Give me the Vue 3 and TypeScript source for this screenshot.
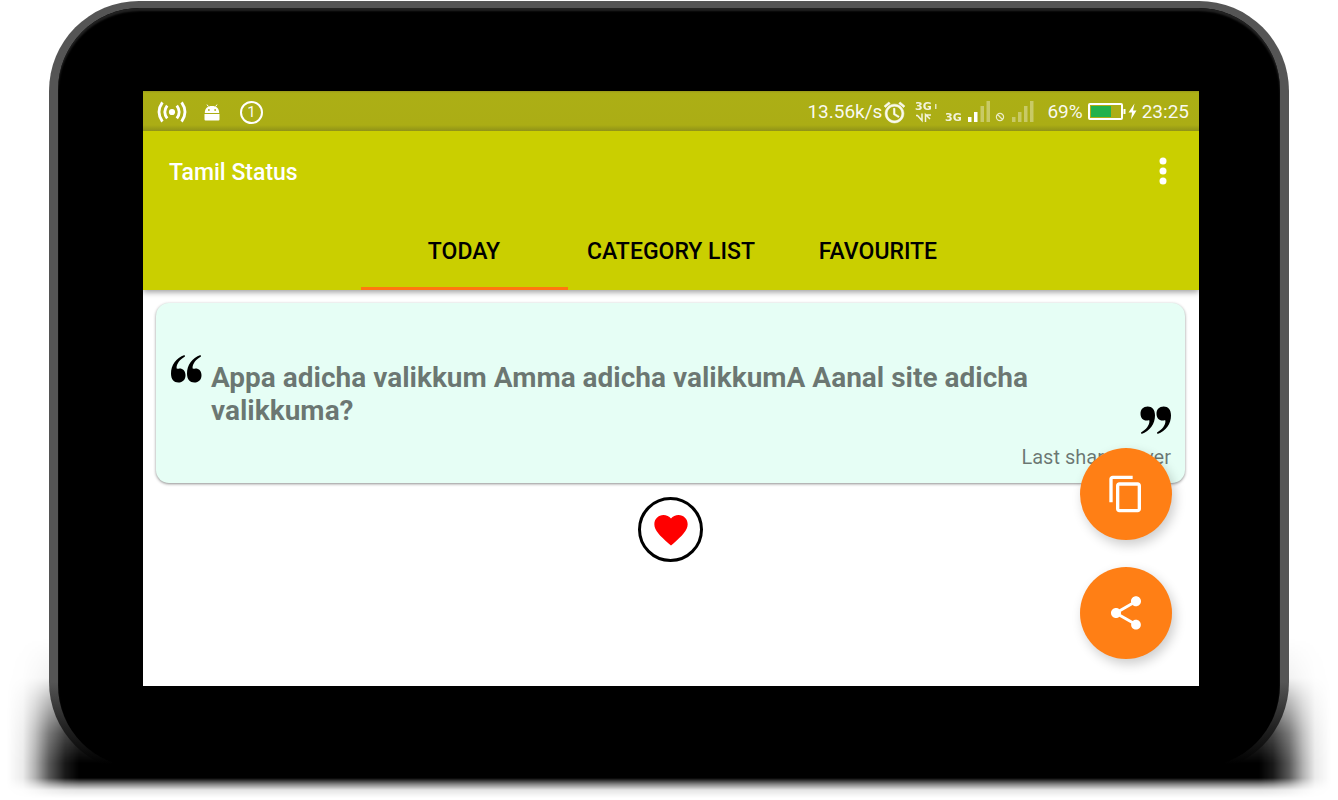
<script setup lang="ts">
import { ref } from 'vue'

const tabs: string[] = ['TODAY', 'CATEGORY LIST', 'FAVOURITE']
const activeTab = ref<string>('TODAY')
const liked = ref<boolean>(true)
</script>

<template>
  <div class="stage">
    <div class="device">
      <div class="face">
        <main class="screen">
          <header class="status">
            <div class="status-left">
              <svg width="30" height="22" viewBox="0 0 30 22" fill="none" stroke="#fff" stroke-width="2.8" aria-hidden="true">
                <circle cx="15" cy="11" r="3.1" fill="#fff" stroke="none" />
                <path d="M10.2 4.6Q5.4 11 10.2 17.4M5.4 1.4Q-1.4 11 5.4 20.6M19.8 4.6Q24.6 11 19.8 17.4M24.6 1.4Q31.400 11 24.6 20.6" />
              </svg>
              <svg class="robot" width="16" height="17" viewBox="0 0 16 17" fill="#fff" aria-hidden="true">
                <path d="M3 .6l1.400 2M13 .6l-1.400 2" stroke="#fff" stroke-width="1" />
                <path fill-rule="evenodd" d="M.8 9C.8 4.500 3.500 2 8 2s7.200 2.500 7.200 7zM4 5.200h1.700v1.600H4zM10.300 5.200H12v1.600h-1.700z" />
                <path d="M.5 10h15v5.500q0 1-1 1h-13q-1 0-1-1z" />
              </svg>
              <span class="count">1</span>
            </div>
            <div class="status-right">
              <span>13.56k/s</span>
              <svg class="alarm" width="25" height="25" viewBox="0 0 24 24" fill="#fff" fill-opacity=".92" stroke="#fff" stroke-width=".5" aria-hidden="true">
                <path d="M22 5.720l-4.600-3.860-1.290 1.530 4.600 3.860L22 5.720zM7.880 3.390L6.600 1.860 2 5.710l1.290 1.530 4.590-3.850zM12.500 8H11v6l4.750 2.850.75-1.230-4-2.370V8zM12 4c-4.970 0-9 4.030-9 9s4.020 9 9 9c4.970 0 9-4.030 9-9s-4.030-9-9-9zm0 16c-3.870 0-7-3.130-7-7s3.130-7 7-7 7 3.130 7 7-3.130 7-7 7z" />
              </svg>
              <svg class="network" width="120" height="24" viewBox="0 0 120 24" fill="#fff" aria-hidden="true">
                <text x="0" y="10" class="net">3G</text>
                <path d="M20 4h1.500v5H20z" opacity=".7" />
                <path d="M1 15.500h1.500L7 20.500V13.500M10.500 22V14.500L15 19M10.500 15h5.500" fill="none" stroke="#fff" stroke-width="1.500" opacity=".85" />
                <text x="30" y="21" class="net">3G</text>
                <path d="M53 17h3.500v5H53zM59 12h3.500v10H59z" />
                <path d="M65.500 6H69v16h-3.500zM71.500 1H75v21h-3.500zM97 17h3.500v5H97zM103 12h3.500v10H103zM109 6h3.500v16H109zM115 1h3.500v21H115z" opacity=".35" />
                <path d="M88.600 17a3.600 3.600 0 1 1-7.200 0a3.600 3.600 0 1 1 7.200 0M82.500 14.500l5 5" fill="none" stroke="#fff" stroke-width="1.200" opacity=".75" />
              </svg>
              <span>69%</span>
              <svg class="battery" width="50" height="18" viewBox="0 0 50 18" aria-hidden="true">
                <rect x="1" y="1" width="33" height="15" rx="1" fill="none" stroke="#fff" stroke-width="2" />
                <path d="M3 3h20v11H3z" fill="#22b14c" />
                <path d="M35.500 6h2v5h-2z" fill="#fff" />
                <path d="M46.500 .5L40.500 9.500h3.500L43 16.500 48.500 7.500H45z" fill="#fff" />
              </svg>
              <time>23:25</time>
            </div>
          </header>

          <div class="appbar">
            <div class="toolbar">
              <h1>Tamil Status</h1>
              <button class="more" type="button" aria-label="More options">
                <svg width="40" height="40" viewBox="0 0 24 24" fill="#fff" aria-hidden="true">
                  <circle cx="12" cy="6" r="2.100" /><circle cx="12" cy="12" r="2.100" /><circle cx="12" cy="18" r="2.100" />
                </svg>
              </button>
            </div>
            <nav class="tabs">
              <button
                v-for="tab in tabs"
                :key="tab"
                type="button"
                class="tab"
                :class="{ active: tab === activeTab }"
                @click="activeTab = tab"
              >{{ tab }}</button>
            </nav>
          </div>

          <section class="content">
            <article class="card">
              <div class="quote">
                <svg class="mark" width="31" height="28" viewBox="0 0 31 28" aria-hidden="true">
                  <path d="M13.500 0C5 3 0 10 0 18.500C0 24.500 3 27.500 7.300 27.500C11.800 27.500 14.500 24.500 14.500 20.200C14.500 16 12 13.400 8.500 13.400C7.500 13.400 6.800 14 5.600 13.600C5.200 9 9 4.500 14 1.600z" />
                  <path d="M29.500 0C21 3 16 10 16 18.500C16 24.500 19 27.500 23.300 27.500C27.800 27.500 30.500 24.500 30.500 20.200C30.500 16 28 13.400 24.500 13.400C23.500 13.400 22.800 14 21.600 13.600C21.200 9 25 4.500 30 1.600z" />
                </svg>
                <p>Appa adicha valikkum Amma adicha valikkumA Aanal site adicha valikkuma?</p>
                <svg class="mark close" width="31" height="28" viewBox="0 0 31 28" aria-hidden="true">
                  <g transform="rotate(180 15.500 14)">
                    <path d="M13.500 0C5 3 0 10 0 18.500C0 24.500 3 27.500 7.300 27.500C11.800 27.500 14.500 24.500 14.500 20.200C14.500 16 12 13.400 8.500 13.400C7.500 13.400 6.800 14 5.600 13.600C5.200 9 9 4.500 14 1.600z" />
                    <path d="M29.500 0C21 3 16 10 16 18.500C16 24.500 19 27.500 23.300 27.500C27.800 27.500 30.500 24.500 30.500 20.200C30.500 16 28 13.400 24.500 13.400C23.500 13.400 22.800 14 21.600 13.600C21.200 9 25 4.500 30 1.600z" />
                  </g>
                </svg>
              </div>
              <p class="shared">Last share Never</p>
            </article>
            <button class="like" type="button" aria-label="Favourite" :aria-pressed="liked" @click="liked = !liked">
              <svg width="40" height="40" viewBox="0 0 24 24" :fill="liked ? '#f00' : '#999'" aria-hidden="true">
                <path d="M12 21.350l-1.450-1.320C5.400 15.360 2 12.280 2 8.500 2 5.420 4.420 3 7.500 3c1.740 0 3.410.81 4.500 2.090C13.090 3.810 14.760 3 16.500 3 19.580 3 22 5.420 22 8.500c0 3.780-3.400 6.860-8.550 11.540L12 21.350z" />
              </svg>
            </button>
          </section>

          <div class="fabs">
            <button class="fab" type="button" aria-label="Copy">
              <svg width="40" height="40" viewBox="0 0 24 24" fill="#fff" aria-hidden="true">
                <path d="M16 1H4c-1.100 0-2 .9-2 2v14h2V3h12V1zm3 4H8c-1.100 0-2 .9-2 2v14c0 1.100.9 2 2 2h11c1.100 0 2-.9 2-2V7c0-1.100-.9-2-2-2zm0 16H8V7h11v14z" />
              </svg>
            </button>
            <button class="fab" type="button" aria-label="Share">
              <svg width="40" height="40" viewBox="0 0 24 24" fill="#fff" aria-hidden="true">
                <path d="M18 16.080c-.76 0-1.440.3-1.960.77L8.910 12.700c.05-.23.09-.46.09-.7s-.04-.47-.09-.7l7.050-4.110c.54.5 1.250.81 2.040.81 1.660 0 3-1.340 3-3s-1.340-3-3-3-3 1.340-3 3c0 .24.04.47.09.7L8.040 9.810C7.500 9.310 6.790 9 6 9c-1.660 0-3 1.340-3 3s1.340 3 3 3c.79 0 1.500-.31 2.040-.81l7.120 4.160c-.05.21-.08.43-.08.65 0 1.610 1.310 2.920 2.920 2.920 1.610 0 2.920-1.310 2.920-2.920s-1.310-2.920-2.920-2.920z" />
              </svg>
            </button>
          </div>
        </main>
      </div>
    </div>
  </div>
</template>

<style>
body {
  background: #fff;
}
</style>

<style scoped>
* {
  box-sizing: border-box;
}

button {
  border: 0;
  margin: 0;
  padding: 0;
  background: none;
  font: inherit;
  color: inherit;
  cursor: pointer;
}

svg {
  display: block;
  flex: none;
}

.stage {
  display: flex;
  min-height: 100vh;
  padding: 1px 49px 28px;
  overflow: hidden;
  font-family: Roboto, "Noto Sans", sans-serif;
}

.device {
  position: relative;
  display: flex;
  flex: 1;
  min-width: 0;
  padding: 7px 9px 5px;
  border-radius: 90px;
  background: linear-gradient(#555, #555 calc(100% - 90px), #222 calc(100% - 45px), #000 calc(100% - 8px));
}

.device::before {
  content: "";
  position: absolute;
  z-index: -1;
  left: -42px;
  right: -42px;
  bottom: -26px;
  height: 160px;
  background: linear-gradient(90deg, transparent, rgba(0, 0, 0, .08) 16px, rgba(0, 0, 0, .3) 28px, rgba(0, 0, 0, .65) 42px, rgba(0, 0, 0, .9) 58px, #000 72px, #000 calc(100% - 72px), rgba(0, 0, 0, .9) calc(100% - 58px), rgba(0, 0, 0, .65) calc(100% - 42px), rgba(0, 0, 0, .3) calc(100% - 28px), rgba(0, 0, 0, .08) calc(100% - 16px), transparent);
  mask-image: linear-gradient(transparent, rgba(0, 0, 0, .08) 40px, rgba(0, 0, 0, .4) 62px, rgba(0, 0, 0, .8) 95px, #000 125px, #000 140px, rgba(0, 0, 0, .5) 146px, rgba(0, 0, 0, .1) 152px, transparent);
}

.face {
  display: flex;
  flex: 1;
  min-width: 0;
  padding: 83px 81px 81px 85px;
  border-radius: 82px;
  background: #000;
  box-shadow: inset 0 3px 2px #222;
}

.screen {
  position: relative;
  display: flex;
  flex: 1;
  flex-direction: column;
  min-width: 0;
  background: #fff;
}

.status {
  display: flex;
  align-items: center;
  justify-content: space-between;
  height: 40px;
  padding: 2px 10px 0 14px;
  background: linear-gradient(#99991a, #acaf15 2px, #abad15 34px, #8f9218);
  color: rgba(255, 255, 255, .95);
  font-size: 19px;
  line-height: 24px;
}

.status-left,
.status-right {
  display: flex;
  align-items: center;
}

.status-left {
  gap: 17px;
}

.count {
  width: 23px;
  height: 23px;
  margin-left: 3px;
  border: 2px solid #fff;
  border-radius: 50%;
  font-size: 15px;
  line-height: 19px;
  text-align: center;
}

.network {
  margin: 0 12px 0 8px;
}

.net {
  font-family: "DejaVu Sans", sans-serif;
  font-size: 11px;
  font-weight: 700;
  opacity: .85;
}

.battery {
  margin: 0 4px 0 5px;
}

.appbar {
  z-index: 1;
  background: #cacf00;
  box-shadow: 0 2px 6px rgba(0, 0, 0, .4);
  clip-path: inset(0 0 -14px);
}

.toolbar {
  display: flex;
  align-items: center;
  justify-content: space-between;
  height: 80px;
  padding: 0 16px 0 26px;
}

h1 {
  margin: 0;
  padding-top: 3px;
  color: #fff;
  font-size: 23px;
  font-weight: 500;
  line-height: 28px;
}

.tabs {
  display: grid;
  grid-template-columns: repeat(3, 207px);
  justify-content: center;
  height: 79px;
}

.tab {
  padding-top: 2px;
  border-top: 3px solid transparent;
  border-bottom: 3px solid transparent;
  color: #000;
  font-size: 23px;
  font-weight: 500;
  line-height: 28px;
}

.active {
  border-bottom-color: #ff7810;
}

.content {
  display: flex;
  flex: 1;
  flex-direction: column;
  align-items: center;
  gap: 14px;
  padding: 13px 14px 0 13px;
}

.card {
  align-self: stretch;
  padding: 52px 14px 13px 15px;
  border-radius: 13px;
  background: #e6fef5;
  box-shadow: 0 1px 3px rgba(0, 0, 0, .45);
  color: rgba(0, 0, 0, .54);
}

.quote {
  display: flex;
  gap: 9px;
}

.mark {
  fill: #000;
}

.close {
  align-self: flex-end;
}

.quote p {
  flex: 1;
  margin: 0;
  padding: 6px 0 7px;
  font-size: 28px;
  font-weight: 700;
  line-height: 33px;
}

.shared {
  margin: 10px 0 0;
  font-size: 20px;
  line-height: 26px;
  text-align: right;
}

.like {
  display: flex;
  align-items: center;
  justify-content: center;
  width: 65px;
  height: 65px;
  border: 3px solid #000;
  border-radius: 50%;
}

.fabs {
  position: absolute;
  z-index: 2;
  right: 27px;
  bottom: 27px;
  display: flex;
  flex-direction: column;
  gap: 27px;
}

.fab {
  display: flex;
  align-items: center;
  justify-content: center;
  width: 92px;
  height: 92px;
  border-radius: 50%;
  background: #ff7f15;
  box-shadow: 3px 5px 12px rgba(0, 0, 0, .2);
}
</style>
